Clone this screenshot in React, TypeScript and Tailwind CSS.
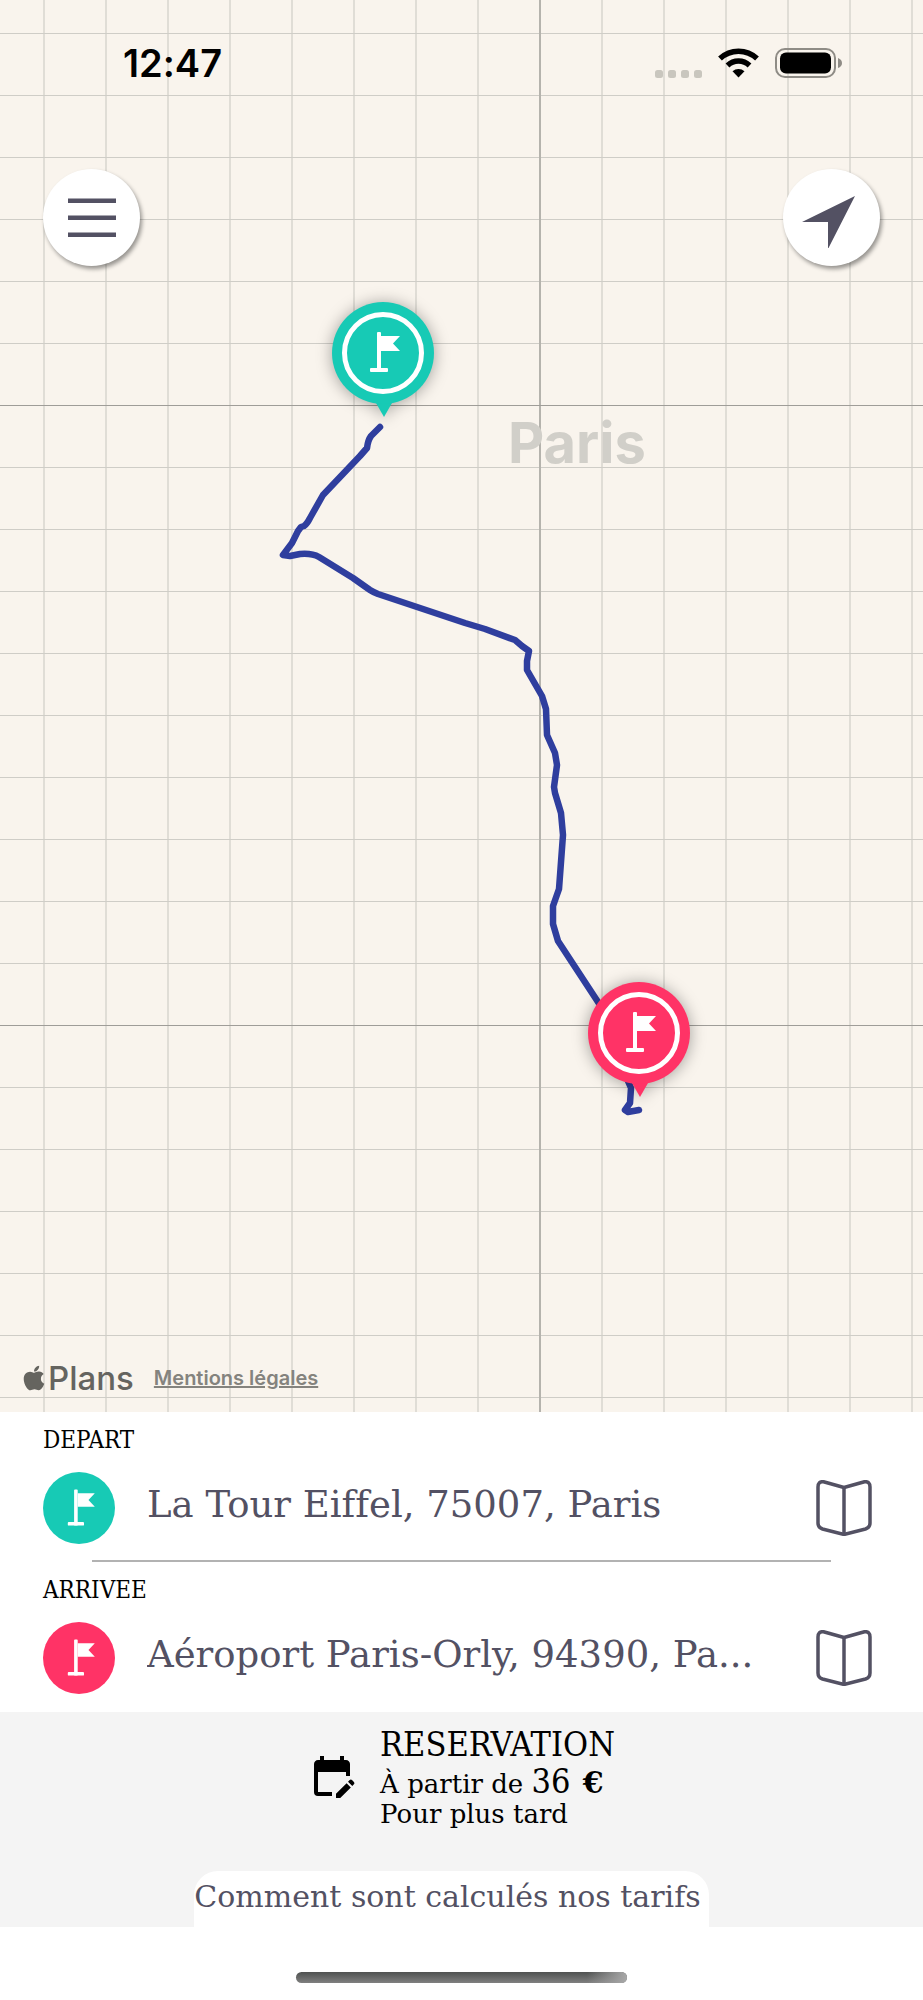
import { FaApple } from 'react-icons/fa';
import { MdEditCalendar } from 'react-icons/md';

const ROUTE =
  'M380 427 L371 436 Q368 440 367 448 L360 456 L323 495 L310 518 Q307 524 304 526 L301 527 L298 531 L292 543 L283 555 L290 556 L300 554 Q312 553 319 557 L353 578 L370 590 Q373 592 378 594 L453 619 L465 623 L485 629 L515 640 L522 646 L529 651 L527 661 L527 670 L542 696 L546 709 L547 735 L555 753 L557 765 L554 787 L555 793 L561 813 L563 835 L559 889 L553 906 L553 924 L558 941 L598 1002 L622 1040 L628 1081 L631 1088 L630 1103 L625 1110 L628 1112 L639 1110';

const pins = [
  { id: 'depart', x: 383, y: 353, color: '#17cab5' },
  { id: 'arrivee', x: 639, y: 1033, color: '#ff3366' }
];

const stops = [
  { id: 'depart', label: 'DEPART', value: 'La Tour Eiffel, 75007, Paris', bg: 'bg-[#17cab5]' },
  { id: 'arrivee', label: 'ARRIVEE', value: 'Aéroport Paris-Orly, 94390, Pa...', bg: 'bg-[#ff3366]' }
];

function Flag() {
  return (
    <g fill="#fff">
      <rect x="-6" y="-21" width="4" height="40" rx="1" />
      <rect x="-13" y="15" width="18" height="4" rx="1" />
      <path d="M-2 -17 H17 L10 -9.500 L17 -2 H-2 Z" />
    </g>
  );
}

function BookIcon() {
  return (
    <svg width="56" height="56" viewBox="0 0 56 56" fill="none" stroke="#535163" strokeWidth="3.500" strokeLinejoin="round">
      <path d="M28 7.500 L7.500 1.800 Q2 1 2 7 V43 Q2 47.500 6.500 49 L28 54.500 L49.500 49 Q54 47.500 54 43 V7 Q54 1 48.500 1.800 Z" />
      <path d="M28 7.500 V54" />
    </svg>
  );
}

function StatusBar() {
  return (
    <div className="flex items-center justify-between pt-[39px] pr-[80px] pl-[123px]">
      <span className="font-['Inter'] text-[38px] leading-12 font-semibold text-black">12:47</span>
      <svg width="188" height="32" viewBox="0 0 188 32">
        <g fill="#c9c6be">
          <rect x="0" y="23" width="8" height="8" rx="2.500" />
          <rect x="13" y="23" width="8" height="8" rx="2.500" />
          <rect x="26" y="23" width="8" height="8" rx="2.500" />
          <rect x="39" y="23" width="8" height="8" rx="2.500" />
        </g>
        <g fill="none" stroke="#000" strokeWidth="5.500">
          <path d="M65 11.500 A27 27 0 0 1 102 11.500" />
          <path d="M72.500 18.500 A16 16 0 0 1 94.500 18.500" />
        </g>
        <path d="M83.500 30.500 L77.500 24.300 A9 9 0 0 1 89.500 24.300 Z" />
        <rect x="121" y="2" width="59" height="28" rx="9" fill="none" stroke="#8f8c86" strokeWidth="2" />
        <rect x="125" y="5.500" width="51" height="21" rx="6" />
        <path d="M183 11 Q187 12.500 187 16 Q187 19.500 183 21 Z" fill="#8f8c86" />
      </svg>
    </div>
  );
}

export default function App() {
  const roundButton =
    'flex size-[97px] items-center justify-center rounded-full bg-white shadow-[2px_3px_4px_rgba(0,0,0,0.4)]';

  return (
    <main className="flex min-h-screen flex-col bg-white font-['DejaVu_Serif',serif] [font-variant-ligatures:none]">
      {/* Map */}
      <section className="relative flex flex-1 flex-col overflow-hidden bg-[#f9f4ed]">
        <svg className="absolute inset-0 size-full" aria-hidden="true">
          <defs>
            <pattern id="grid" x="43" y="33" width="62" height="62" patternUnits="userSpaceOnUse">
              <rect width="2" height="62" fill="#e0ddd6" />
              <rect width="62" height="1" fill="#cfcdc7" />
            </pattern>
          </defs>
          <rect width="100%" height="100%" fill="url(#grid)" />
          <rect x="539" width="2" height="100%" fill="#b5b3ad" />
          <rect y="405" width="100%" height="1" fill="#9f9d98" />
          <rect y="1025" width="100%" height="1" fill="#9f9d98" />
          <text x="508" y="463" className="font-['Inter'] text-[56px] font-bold" fill="#d1cfc9">
            Paris
          </text>
          <path d={ROUTE} fill="none" stroke="#2f3e9e" strokeWidth="6.500" strokeLinecap="round" strokeLinejoin="round" />
          {pins.map((pin) => (
            <g
              key={pin.id}
              transform={`translate(${pin.x} ${pin.y})`}
              className="drop-shadow-[0_1px_8px_rgba(0,0,0,0.35)]"
            >
              <path d="M-7 50 H9 L1 64 Z" fill={pin.color} />
              <circle r="51" fill={pin.color} />
              <circle r="38.500" fill="none" stroke="#fff" strokeWidth="5" />
              <Flag />
            </g>
          ))}
        </svg>

        <div className="relative flex flex-1 flex-col">
          <StatusBar />
          <div className="flex justify-between px-[43px] pt-[82px]">
            <button className={roundButton} aria-label="Menu">
              <svg width="48" height="40" viewBox="0 0 48 40" fill="#535163">
                <rect y="0.500" width="48" height="4.500" />
                <rect y="17.500" width="48" height="4.500" />
                <rect y="34.500" width="48" height="4.500" />
              </svg>
            </button>
            <button className={roundButton} aria-label="Ma position">
              <svg width="60" height="60" viewBox="0 0 60 60" fill="#535163">
                <path d="M53 8 L0 34 H26 V61 Z" />
              </svg>
            </button>
          </div>

          <div className="mt-auto flex items-center gap-5 pb-3 pl-5 font-['Inter']">
            <span className="flex items-center text-[33px] leading-11 font-medium text-[#65645f]">
              <FaApple size={28} />
              Plans
            </span>
            <a href="#" className="text-[20px] font-semibold text-[#84837e] underline">
              Mentions légales
            </a>
          </div>
        </div>
      </section>

      {/* Trajet */}
      <section className="pb-0.5">
        {stops.map((stop, index) => (
          <div key={stop.id}>
            {index > 0 && <hr className="mx-[92px] border-t-2 border-[#b2b2b2]" />}
            <div className="pt-3 pr-[51px] pb-4 pl-[43px]">
              <label
                htmlFor={stop.id}
                className="block font-['DejaVu_Serif_Condensed','DejaVu_Serif',serif] text-[24px] leading-8 text-black"
              >
                {stop.label}
              </label>
              <div className="mt-4 flex items-center">
                <span className={`flex size-18 shrink-0 items-center justify-center rounded-full ${stop.bg}`}>
                  <svg width="45" height="45" viewBox="-25 -25 50 50">
                    <Flag />
                  </svg>
                </span>
                <input
                  id={stop.id}
                  type="text"
                  defaultValue={stop.value}
                  className="ml-8 h-18 min-w-0 flex-1 pb-2 text-[37px] text-[#535163] outline-none"
                />
                <button className="ml-4" aria-label="Carnet d'adresses">
                  <BookIcon />
                </button>
              </div>
            </div>
          </div>
        ))}
      </section>

      {/* Reservation */}
      <section className="flex flex-col items-center bg-[#f4f4f4] pt-3">
        <button className="flex items-center gap-6 text-left text-black">
          <MdEditCalendar size={48} />
          <span>
            <span className="block font-['DejaVu_Serif_Condensed','DejaVu_Serif',serif] text-[34px] leading-10">
              RESERVATION
            </span>
            <span className="block h-9 text-[26px] leading-9">
              À partir de{' '}
              <span className="font-['DejaVu_Serif_Condensed','DejaVu_Serif',serif] text-[34px] leading-none">36</span>{' '}
              <b className="ml-1 text-[30px] leading-none">€</b>
            </span>
            <span className="block text-[26px] leading-7">Pour plus tard</span>
          </span>
        </button>
        <a
          href="#"
          className="mt-[43px] mr-5 rounded-t-3xl bg-white pr-2 pb-1 text-[30px] leading-13 text-[#535163]"
        >
          Comment sont calculés nos tarifs
        </a>
      </section>

      <footer className="flex h-[73px] items-end justify-center pb-[17px]">
        <div className="h-[11px] w-[331px] overflow-hidden rounded-full bg-linear-to-b from-[#4f5150] to-[#808080]">
          <div className="ml-auto h-full w-10 bg-linear-to-r from-transparent to-[#a8a8a8]"></div>
        </div>
      </footer>
    </main>
  );
}
